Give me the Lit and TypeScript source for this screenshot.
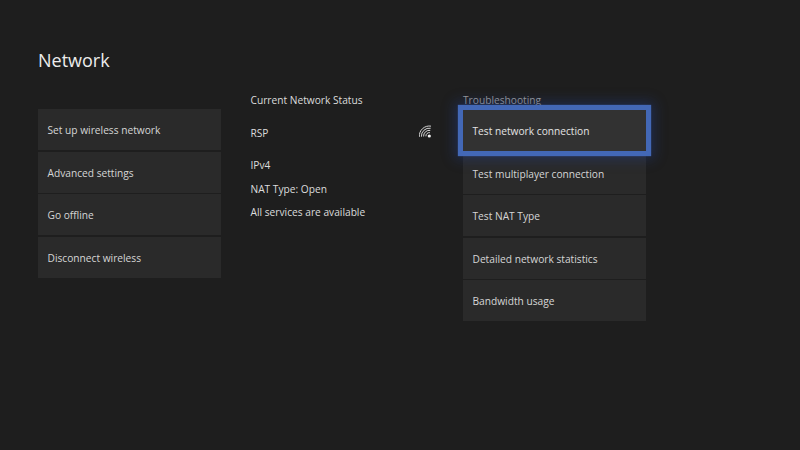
import { LitElement, html, css, svg } from "lit";
import { customElement } from "lit/decorators.js";

const wifi = svg`<svg class="wifi" width="14" height="14" viewBox="0 0 14 14" fill="none" stroke="#e8e8e8" stroke-width="0.9">
  <path d="M.34 11.87A10 10 0 0 1 12 1.15"/>
  <path d="M2.43 11.68A7.9 7.9 0 0 1 11.63 3.26"/>
  <path d="M4.62 11.49A5.7 5.7 0 0 1 11.25 5.41"/>
  <path d="M6.91 11.3A3.4 3.4 0 0 1 10.88 7.65"/>
  <circle cx="10.3" cy="11" r="1.6" fill="#f4f4f4" stroke="none"/>
</svg>`;

@customElement("app-root")
export class AppRoot extends LitElement {
  static styles = css`
    :host {
      display: block;
      width: 800px;
      height: 450px;
      overflow: hidden;
      background: #1e1e1e;
      color: #dcdcdc;
      font-family: "Open Sans", "Noto Sans", sans-serif;
      font-size: 10.2px;
    }
    .page { padding: 46px 0 0 38px; box-sizing: border-box; height: 100%; }
    h1 {
      margin: 0;
      height: 28px;
      font-size: 18px;
      line-height: 28px;
      font-weight: 400;
      color: #ececec;
    }
    .columns {
      display: grid;
      grid-template-columns: 183px 183px 183px;
      column-gap: 29.5px;
      margin-top: 18px;
    }
    .list { display: flex; flex-direction: column; gap: 1.5px; }
    .left { margin-top: 17px; }
    .tile {
      height: 41px;
      background: #2a2a2a;
      display: flex;
      align-items: center;
      padding-left: 9.5px;
      padding-top: 1px;
      box-sizing: border-box;
      color: #d6d6d6;
      white-space: nowrap;
    }
    .tile.focus {
      background: #323232;
      color: #e4e4e4;
      box-shadow: 0 0 1px 5px #4368b6, 0 0 12px 8px rgba(35, 70, 160, 0.36);
      position: relative;
    }
    .status { display: flex; flex-direction: column; }
    .status-line { height: 23.6px; line-height: 16px; }
    .head { height: 32.5px; color: #dcdcdc; }
    .rsp {
      display: flex;
      justify-content: space-between;
      align-items: flex-start;
      height: 32.5px;
      padding-right: 1px;
    }
    .right { display: flex; flex-direction: column; }
    .label { height: 18px; line-height: 16px; box-sizing: border-box; color: #9a9a9a; }
  `;

  render() {
    const left = ["Set up wireless network", "Advanced settings", "Go offline", "Disconnect wireless"];
    const right = ["Test network connection", "Test multiplayer connection", "Test NAT Type", "Detailed network statistics", "Bandwidth usage"];
    return html`<div class="page">
      <h1>Network</h1>
      <div class="columns">
        <div class="list left">${left.map((t) => html`<div class="tile">${t}</div>`)}</div>
        <div class="status">
          <div class="status-line head">Current Network Status</div>
          <div class="status-line rsp"><span>RSP</span>${wifi}</div>
          <div class="status-line">IPv4</div>
          <div class="status-line">NAT Type: Open</div>
          <div class="status-line">All services are available</div>
        </div>
        <div class="right">
          <div class="label">Troubleshooting</div>
          <div class="list">
            ${right.map((t, i) => html`<div class="tile ${i === 0 ? "focus" : ""}">${t}</div>`)}
          </div>
        </div>
      </div>
    </div>`;
  }
}
